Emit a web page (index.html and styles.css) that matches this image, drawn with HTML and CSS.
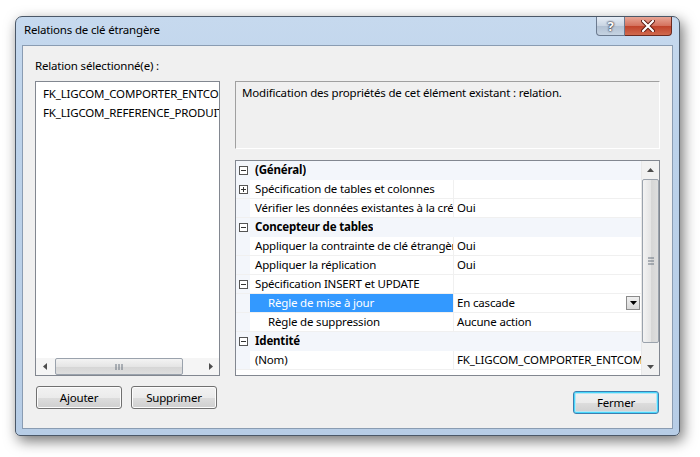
FILE: index.html
```html
<!DOCTYPE html>
<html lang="fr">

<head>
    <meta charset="UTF-8">
    <title>Relations de clé étrangère</title>
    <link rel="stylesheet" href="styles.css">
</head>

<body>
    <div class="window">
        <div class="titlebar">
            <span class="title">Relations de clé étrangère</span>
            <div class="caption-buttons">
                <div class="cap-btn help">?</div>
                <div class="cap-btn close">
                    <svg width="14" height="12" viewBox="0 0 14 12">
                        <path d="M2 1 L12 11 M12 1 L2 11" stroke="#5a1a12" stroke-width="4" stroke-linecap="round" />
                        <path d="M2 1 L12 11 M12 1 L2 11" stroke="#fff" stroke-width="2.2" stroke-linecap="round" />
                    </svg>
                </div>
            </div>
        </div>

        <div class="client">
            <div class="label">Relation sélectionné(e) :</div>
            <div class="main">
                <div class="left">
                    <div class="listbox">
                        <div class="list-items">
                            <div class="list-item">FK_LIGCOM_COMPORTER_ENTCOM</div>
                            <div class="list-item">FK_LIGCOM_REFERENCE_PRODUIT</div>
                        </div>
                        <div class="hscroll">
                            <div class="arrow-btn">
                                <svg width="4" height="7" viewBox="0 0 4 7"><path d="M4 0 L0 3.5 L4 7 Z" fill="#4d4d4d" /></svg>
                            </div>
                            <div class="hthumb">
                                <svg width="8" height="6" viewBox="0 0 8 6"><path d="M1 0 V6 M4 0 V6 M7 0 V6" stroke="#6b7480" stroke-width="1" /></svg>
                            </div>
                            <div class="htrack"></div>
                            <div class="arrow-btn">
                                <svg width="4" height="7" viewBox="0 0 4 7"><path d="M0 0 L4 3.5 L0 7 Z" fill="#4d4d4d" /></svg>
                            </div>
                        </div>
                    </div>
                    <div class="btn-row">
                        <button class="btn">Ajouter</button>
                        <button class="btn">Supprimer</button>
                    </div>
                </div>

                <div class="right">
                    <div class="description">Modification des propriétés de cet élément existant : relation.</div>
                    <div class="propgrid">
                        <div class="rows">
                            <div class="row category"><span class="toggle">−</span><span class="name">(Général)</span></div>
                            <div class="row"><span class="toggle plus">+</span><span class="name">Spécification de tables et colonnes</span><span class="value"></span></div>
                            <div class="row"><span class="toggle empty"></span><span class="name">Vérifier les données existantes à la création</span><span class="value">Oui</span></div>
                            <div class="row category"><span class="toggle">−</span><span class="name">Concepteur de tables</span></div>
                            <div class="row"><span class="toggle empty"></span><span class="name">Appliquer la contrainte de clé étrangère</span><span class="value">Oui</span></div>
                            <div class="row"><span class="toggle empty"></span><span class="name">Appliquer la réplication</span><span class="value">Oui</span></div>
                            <div class="row"><span class="toggle">−</span><span class="name">Spécification INSERT et UPDATE</span><span class="value"></span></div>
                            <div class="row sub selected"><span class="toggle empty"></span><span class="name">Règle de mise à jour</span><span class="value">En cascade<span class="drop"><svg width="7" height="4" viewBox="0 0 7 4"><path d="M0 0 H7 L3.5 4 Z" fill="#000" /></svg></span></span></div>
                            <div class="row sub"><span class="toggle empty"></span><span class="name">Règle de suppression</span><span class="value">Aucune action</span></div>
                            <div class="row category"><span class="toggle">−</span><span class="name">Identité</span></div>
                            <div class="row"><span class="toggle empty"></span><span class="name">(Nom)</span><span class="value">FK_LIGCOM_COMPORTER_ENTCOM</span></div>
                        </div>
                        <div class="vscroll">
                            <div class="varrow">
                                <svg width="7" height="4" viewBox="0 0 7 4"><path d="M0 4 L3.5 0 L7 4 Z" fill="#4d4d4d" /></svg>
                            </div>
                            <div class="vthumb">
                                <svg width="6" height="8" viewBox="0 0 6 8"><path d="M0 1 H6 M0 4 H6 M0 7 H6" stroke="#6b7480" stroke-width="1" /></svg>
                            </div>
                            <div class="vtrack"></div>
                            <div class="varrow">
                                <svg width="7" height="4" viewBox="0 0 7 4"><path d="M0 0 H7 L3.5 4 Z" fill="#4d4d4d" /></svg>
                            </div>
                        </div>
                    </div>
                    <div class="btn-row end">
                        <button class="btn default">Fermer</button>
                    </div>
                </div>
            </div>
        </div>
    </div>
</body>

</html>
```

FILE: styles.css
```css
body {
    margin: 0;
    background: #fff;
    font-family: 'Noto Sans', 'Segoe UI', sans-serif;
    font-size: 11.5px;
    letter-spacing: -0.18px;
    color: #000;
    width: 700px;
    height: 457px;
    overflow: hidden;
}

.window {
    margin: 16px 0 0 15px;
    width: 665px;
    height: 420px;
    box-sizing: border-box;
    border: 1px solid #4b5868;
    border-radius: 7px 7px 5px 5px;
    background: linear-gradient(180deg, #c6d9ee 0%, #bcd2ea 30%, #b7cde6 100%);
    box-shadow: 3px 5px 14px rgba(0, 0, 0, 0.55);
    display: flex;
    flex-direction: column;
}

.titlebar {
    height: 28px;
    display: flex;
    align-items: flex-start;
    justify-content: space-between;
    padding-left: 8px;
}

.title {
    margin-top: 5px;
    color: #000;
}

.caption-buttons {
    display: flex;
    margin-right: 7px;
}

.cap-btn {
    height: 18px;
    border: 1px solid #6b7a8f;
    border-top: none;
    display: flex;
    align-items: center;
    justify-content: center;
}

.cap-btn.help {
    width: 27px;
    border-radius: 0 0 0 4px;
    background: linear-gradient(180deg, #e6edf6 0%, #c8d4e2 50%, #b2c1d3 51%, #c5d3e2 100%);
    color: #fff;
    font-weight: bold;
    font-size: 13px;
    text-shadow: 0 0 2px #223, 0 0 2px #223;
}

.cap-btn.close {
    width: 46px;
    border-left: none;
    border-radius: 0 0 4px 0;
    border-color: #6b2a20;
    background: linear-gradient(180deg, #e8a595 0%, #d4705c 50%, #c0422a 51%, #d06a4e 100%);
}

.client {
    flex: 1;
    margin: 0 6px 6px 6px;
    background: #f0f0f0;
    border: 1px solid #8a9cb2;
    box-sizing: border-box;
    padding: 12px 0 0 12px;
}

.label {
    height: 23px;
}

.main {
    display: flex;
    gap: 15px;
}

.left {
    width: 185px;
}

.listbox {
    height: 295px;
    box-sizing: border-box;
    border: 1px solid #828790;
    background: #fff;
    display: flex;
    flex-direction: column;
}

.list-items {
    flex: 1;
    padding: 2px 0 0 7px;
    overflow: hidden;
    white-space: nowrap;
}

.list-item {
    height: 19px;
    line-height: 19px;
}

.hscroll {
    height: 17px;
    display: flex;
    align-items: stretch;
    background: #f5f5f5;
    border-top: 1px solid #fff;
}

.arrow-btn {
    flex: none;
    width: 17px;
    display: flex;
    align-items: center;
    justify-content: center;
}

.hthumb {
    flex: none;
    width: 128px;
    margin: 0 0 0 2px;
    box-sizing: border-box;
    border: 1px solid #9aa2ac;
    border-radius: 2px;
    background: linear-gradient(180deg, #f3f3f3 0%, #e5e5e5 50%, #d5d5d5 51%, #dedede 100%);
    display: flex;
    align-items: center;
    justify-content: center;
}

.htrack {
    flex: 1;
}

.btn-row {
    display: flex;
    gap: 9px;
    margin-top: 10px;
    padding-left: 1px;
}

.btn-row.end {
    justify-content: flex-end;
    margin-top: 15px;
    padding-right: 1px;
}

.btn {
    width: 86px;
    height: 23px;
    font-family: inherit;
    font-size: 11.5px;
    letter-spacing: -0.18px;
    color: #000;
    border: 1px solid #707070;
    border-radius: 3px;
    background: linear-gradient(180deg, #f2f2f2 0%, #ebebeb 50%, #dddddd 51%, #cfcfcf 100%);
    box-shadow: inset 0 0 0 1px #fcfcfc;
    padding: 0;
}

.btn.default {
    border-color: #3c7fb1;
    box-shadow: inset 0 0 0 1px #48d8fb, inset 0 0 0 2px #b8e5f4;
}

.right {
    width: 425px;
}

.description {
    height: 68px;
    box-sizing: border-box;
    border: 1px solid #a0a0a0;
    border-color: #a0a0a0 #fff #fff #a0a0a0;
    padding: 3px 6px;
    background: #f0f0f0;
}

.propgrid {
    margin-top: 11px;
    height: 216px;
    box-sizing: border-box;
    border: 1px solid #828790;
    background: #fff;
    display: flex;
}

.rows {
    flex: 1;
    overflow: hidden;
}

.row {
    height: 19px;
    display: flex;
    align-items: stretch;
    line-height: 18px;
    border-bottom: 1px solid #f0f0f0;
    box-sizing: border-box;
    white-space: nowrap;
}

.row.category {
    background: #f3f6fb;
    font-weight: bold;
    border-bottom-color: #f3f6fb;
}

.toggle {
    width: 14px;
    flex-shrink: 0;
    background: #f3f6fb;
    display: flex;
    align-items: center;
    justify-content: center;
    font-size: 0;
}

.toggle::before {
    content: "";
    width: 7px;
    height: 7px;
    border: 1px solid #555;
    background: linear-gradient(#333, #333) center / 5px 1px no-repeat, #fff;
}

.toggle.plus::before {
    background: linear-gradient(#333, #333) center / 5px 1px no-repeat,
        linear-gradient(#333, #333) center / 1px 5px no-repeat, #fff;
}

.toggle.empty::before {
    display: none;
}

.name {
    width: 198px;
    flex-shrink: 0;
    padding-left: 5px;
    overflow: hidden;
    border-right: 1px solid #f0f0f0;
}

.row.category .name {
    width: auto;
    border-right: none;
}

.row.sub .name {
    padding-left: 18px;
    width: 185px;
}

.row.selected .name {
    background: #3399ff;
    color: #fff;
}

.value {
    flex: 1;
    padding-left: 3px;
    overflow: hidden;
    display: flex;
    align-items: center;
}

.drop {
    margin-left: auto;
    margin-right: 1px;
    width: 14px;
    height: 14px;
    box-sizing: border-box;
    border: 1px solid #8b8b8b;
    background: linear-gradient(180deg, #f0f0f0, #d8d8d8);
    display: flex;
    align-items: center;
    justify-content: center;
}

.vscroll {
    width: 17px;
    background: #f1f1f1;
    border-left: 1px solid #e8e8e8;
    display: flex;
    flex-direction: column;
}

.varrow {
    height: 17px;
    display: flex;
    align-items: center;
    justify-content: center;
}

.vthumb {
    height: 162px;
    margin: 1px 0;
    border: 1px solid #9aa2ac;
    border-radius: 2px;
    background: linear-gradient(90deg, #f3f3f3 0%, #e5e5e5 50%, #d5d5d5 51%, #dedede 100%);
    display: flex;
    align-items: center;
    justify-content: center;
}

.vtrack {
    flex: 1;
}
```
